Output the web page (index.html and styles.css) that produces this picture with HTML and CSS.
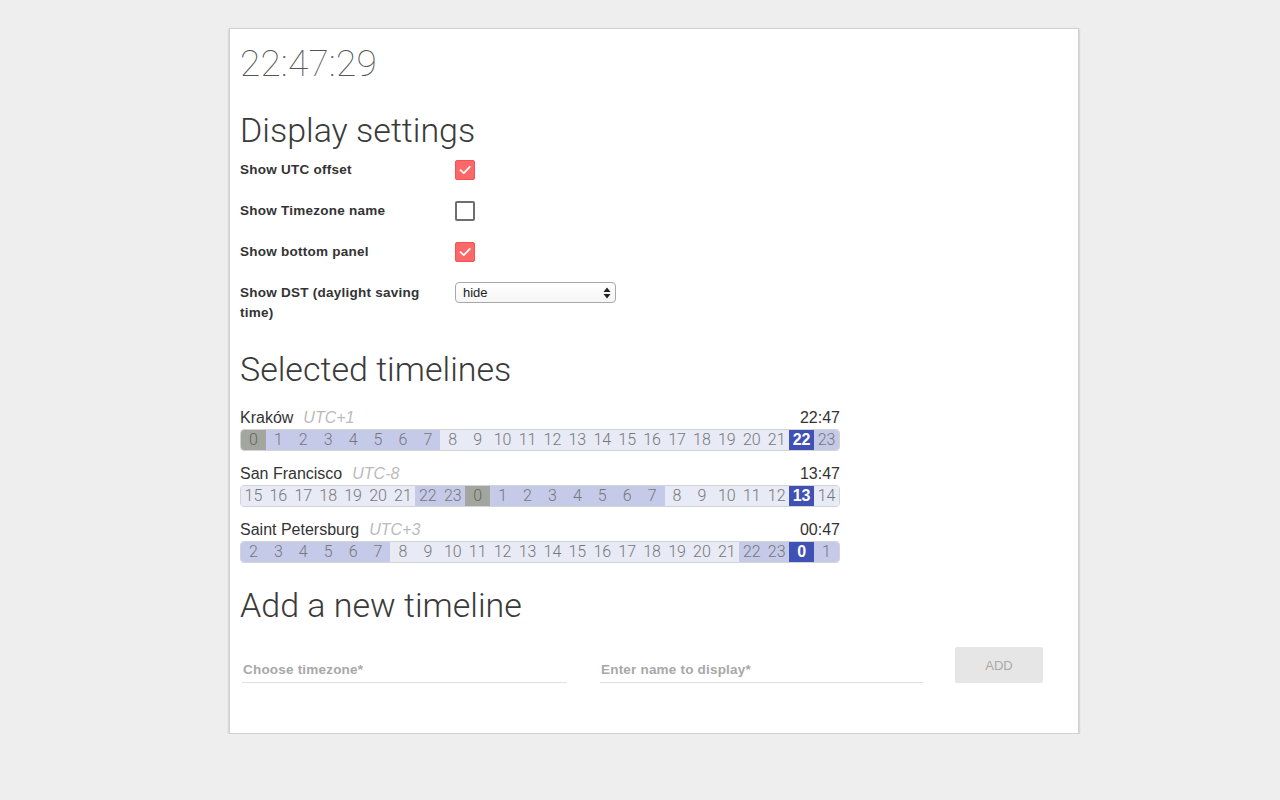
FILE: index.html
```html
<!DOCTYPE html>
<html lang="en">
<head>
<meta charset="utf-8">
<title>Timelines</title>
<link rel="stylesheet" href="styles.css">
</head>
<body>
<main class="card">
  <div class="clock">22:47:29</div>

  <h2 class="heading heading-display">Display settings</h2>
  <div class="settings">
    <div class="label">Show UTC offset</div>
    <div class="control"><span class="check on"><svg viewBox="0 0 20 20" width="20" height="20"><path d="M5.5 10.2 L8.8 13.2 L14.8 6.8" fill="none" stroke="#fff" stroke-width="1.8" stroke-linecap="round" stroke-linejoin="round"/></svg></span></div>

    <div class="label">Show Timezone name</div>
    <div class="control"><span class="check"></span></div>

    <div class="label">Show bottom panel</div>
    <div class="control"><span class="check on"><svg viewBox="0 0 20 20" width="20" height="20"><path d="M5.5 10.2 L8.8 13.2 L14.8 6.8" fill="none" stroke="#fff" stroke-width="1.8" stroke-linecap="round" stroke-linejoin="round"/></svg></span></div>

    <div class="label">Show DST (daylight saving time)</div>
    <div class="control">
      <div class="select">
        <span>hide</span>
        <svg class="select-arrows" viewBox="0 0 8 12" width="8" height="12"><path d="M4 0.5 L7.5 5 L0.5 5 Z M0.5 7 L7.5 7 L4 11.5 Z" fill="#222"/></svg>
      </div>
    </div>
  </div>

  <h2 class="heading heading-selected">Selected timelines</h2>

  <section class="timeline">
    <div class="tl-head"><span class="tl-name">Kraków</span><span class="tl-utc">UTC+1</span><span class="tl-time">22:47</span></div>
    <div class="bar">
      <span class="c mid">0</span><span class="c night">1</span><span class="c night">2</span><span class="c night">3</span><span class="c night">4</span><span class="c night">5</span><span class="c night">6</span><span class="c night">7</span><span class="c day">8</span><span class="c day">9</span><span class="c day">10</span><span class="c day">11</span><span class="c day">12</span><span class="c day">13</span><span class="c day">14</span><span class="c day">15</span><span class="c day">16</span><span class="c day">17</span><span class="c day">18</span><span class="c day">19</span><span class="c day">20</span><span class="c day">21</span><span class="c now">22</span><span class="c night">23</span>
    </div>
  </section>

  <section class="timeline">
    <div class="tl-head"><span class="tl-name">San Francisco</span><span class="tl-utc">UTC-8</span><span class="tl-time">13:47</span></div>
    <div class="bar">
      <span class="c day">15</span><span class="c day">16</span><span class="c day">17</span><span class="c day">18</span><span class="c day">19</span><span class="c day">20</span><span class="c day">21</span><span class="c night">22</span><span class="c night">23</span><span class="c mid">0</span><span class="c night">1</span><span class="c night">2</span><span class="c night">3</span><span class="c night">4</span><span class="c night">5</span><span class="c night">6</span><span class="c night">7</span><span class="c day">8</span><span class="c day">9</span><span class="c day">10</span><span class="c day">11</span><span class="c day">12</span><span class="c now">13</span><span class="c day">14</span>
    </div>
  </section>

  <section class="timeline">
    <div class="tl-head"><span class="tl-name">Saint Petersburg</span><span class="tl-utc">UTC+3</span><span class="tl-time">00:47</span></div>
    <div class="bar">
      <span class="c night">2</span><span class="c night">3</span><span class="c night">4</span><span class="c night">5</span><span class="c night">6</span><span class="c night">7</span><span class="c day">8</span><span class="c day">9</span><span class="c day">10</span><span class="c day">11</span><span class="c day">12</span><span class="c day">13</span><span class="c day">14</span><span class="c day">15</span><span class="c day">16</span><span class="c day">17</span><span class="c day">18</span><span class="c day">19</span><span class="c day">20</span><span class="c day">21</span><span class="c night">22</span><span class="c night">23</span><span class="c now">0</span><span class="c night">1</span>
    </div>
  </section>

  <h2 class="heading heading-add">Add a new timeline</h2>
  <div class="add-row">
    <label class="field field-tz"><input type="text" placeholder="Choose timezone*"></label>
    <label class="field field-name"><input type="text" placeholder="Enter name to display*"></label>
    <button class="add-btn" type="button">ADD</button>
  </div>
</main>
</body>
</html>
```

FILE: styles.css
```css
html, body {
  margin: 0;
  padding: 0;
}

body {
  background: #eeeeee;
  font-family: "Liberation Sans", Arial, sans-serif;
  color: #333;
  padding-top: 28px;
}

.card {
  box-sizing: border-box;
  width: 850px;
  height: 706px;
  margin-left: 229px;
  background: #fff;
  border: 1px solid #d2d2d2;
  box-shadow: 0 1px 2px rgba(0, 0, 0, 0.28);
  padding: 0 10px;
}

.clock {
  margin-top: 17px;
  font-family: Roboto, "Liberation Sans", sans-serif;
  font-weight: 100;
  font-size: 37px;
  line-height: 36px;
  color: #555;
  letter-spacing: 0.3px;
}

.heading {
  margin: 0;
  font-family: Roboto, "Liberation Sans", sans-serif;
  font-weight: 300;
  font-size: 34px;
  line-height: 36px;
  color: #3a3a3a;
  letter-spacing: 0;
}

.heading-display { margin-top: 30px; }
.heading-selected { margin-top: 28px; }
.heading-add { margin-top: 24px; }

.settings {
  margin-top: 12px;
  display: grid;
  grid-template-columns: 215px auto;
  row-gap: 21px;
  align-items: start;
}

.label {
  font-size: 13.5px;
  font-weight: bold;
  line-height: 20px;
  letter-spacing: 0.25px;
  color: #333;
  padding-right: 25px;
}

.control {
  display: flex;
  height: 20px;
  align-items: flex-start;
}

.check {
  box-sizing: border-box;
  display: block;
  width: 20px;
  height: 20px;
  border: 2px solid #6e6e6e;
  border-radius: 2px;
}

.check.on {
  border: 1px solid #f25454;
  background: #fd6767;
}

.check.on svg {
  display: block;
  margin: -1px;
}

.select {
  position: relative;
  box-sizing: border-box;
  width: 161px;
  height: 21px;
  margin-top: -1px;
  border: 1px solid #a8a8a8;
  border-radius: 4px;
  background: linear-gradient(#fff, #f6f6f6);
  font-size: 13px;
  line-height: 19px;
  padding-left: 7px;
  color: #222;
}

.select-arrows {
  position: absolute;
  right: 4px;
  top: 4px;
}

.timeline {
  width: 600px;
}

.timeline + .timeline { margin-top: 13px; }
.heading-selected + .timeline { margin-top: 21px; }

.tl-head {
  display: flex;
  align-items: baseline;
  font-size: 16px;
  line-height: 20px;
  height: 20px;
}

.tl-name { color: #333; }

.tl-utc {
  margin-left: 10px;
  font-style: italic;
  color: #bbb;
}

.tl-time {
  margin-left: auto;
  color: #333;
}

.bar {
  box-sizing: border-box;
  margin-top: 1px;
  width: 600px;
  height: 22px;
  display: grid;
  grid-template-columns: repeat(24, 1fr);
  border: 1px solid #d4d4d4;
  border-radius: 4px;
  overflow: hidden;
}

.c {
  display: block;
  text-align: center;
  font-family: Roboto, "Liberation Sans", sans-serif;
  font-weight: 300;
  font-size: 16px;
  line-height: 20px;
  color: #777;
}

.c.day { background: #e8eaf6; }
.c.night { background: #c5cae9; }
.c.mid { background: #a3a59f; color: #666; }
.c.now {
  background: #3f51b5;
  color: #fff;
  font-family: "Liberation Sans", Arial, sans-serif;
  font-weight: bold;
}

.add-row {
  margin-top: 24px;
  display: flex;
  align-items: flex-end;
}

.field {
  display: block;
  border-bottom: 1px solid #e0e0e0;
}

.field-tz { width: 325px; margin-left: 2px; }
.field-name { width: 323px; margin-left: 33px; }

.field input {
  box-sizing: border-box;
  display: block;
  width: 100%;
  border: 0;
  outline: 0;
  background: transparent;
  padding: 0 1px 2px;
  font-family: "Liberation Sans", Arial, sans-serif;
  font-size: 13.5px;
  font-weight: bold;
  letter-spacing: 0.2px;
  line-height: 20px;
  color: #333;
}

.field input::placeholder {
  color: #a8a8a8;
}

.add-btn {
  margin-left: 32px;
  width: 88px;
  height: 36px;
  border: 0;
  border-radius: 2px;
  background: #e6e6e6;
  color: #aaa;
  font-family: "Liberation Sans", Arial, sans-serif;
  font-size: 13px;
  padding: 0;
  margin-bottom: 0;
}
```
